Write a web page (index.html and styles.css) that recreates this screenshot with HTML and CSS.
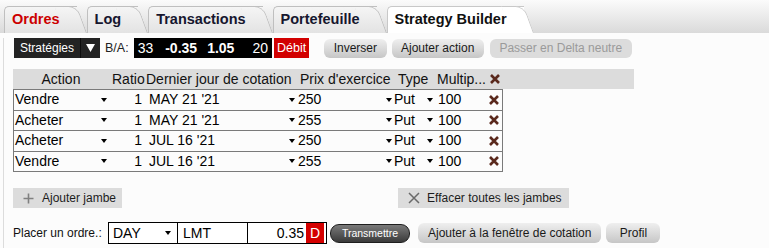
FILE: index.html
```html
<!DOCTYPE html>
<html lang="fr">
<head>
<meta charset="utf-8">
<title>Strategy Builder</title>
<link rel="stylesheet" href="styles.css">
</head>
<body>
<div class="tabs">
  <div class="tab tab-red">Ordres</div>
  <div class="tab">Log</div>
  <div class="tab">Transactions</div>
  <div class="tab">Portefeuille</div>
  <div class="tab tab-active">Strategy Builder</div>
</div>
<div class="content">
  <div class="toolbar">
    <div class="strat">Stratégies</div>
    <div class="strat-arrow"><svg width="9" height="8" viewBox="0 0 9 8"><path d="M0 0H9L4.5 8Z" fill="#fff"/></svg></div>
    <div class="ba">B/A:</div>
    <div class="quote">
      <span class="q-size">33</span>
      <span class="q-bid">-0.35</span>
      <span class="q-ask">1.05</span>
      <span class="q-size q-size2">20</span>
    </div>
    <div class="debit">Débit</div>
    <div class="btn btn-first">Inverser</div>
    <div class="btn">Ajouter action</div>
    <div class="btn btn-disabled">Passer en Delta neutre</div>
  </div>

  <div class="table">
    <div class="thead">
      <div class="th c1">Action</div>
      <div class="th c2">Ratio</div>
      <div class="th c3">Dernier jour de cotation</div>
      <div class="th c4">Prix d'exercice</div>
      <div class="th c5">Type</div>
      <div class="th c6">Multip...</div>
      <div class="th c7"><svg class="xicon" width="10" height="10" viewBox="0 0 10 10"><path d="M1 1L9 9M9 1L1 9"/></svg></div>
    </div>
    <div class="row">
      <div class="td c1 sel"><span>Vendre</span><i class="arr"></i></div>
      <div class="td c2">1</div>
      <div class="td c3 sel"><span>MAY 21 '21</span><i class="arr"></i></div>
      <div class="td c4 sel"><span>250</span><i class="arr"></i></div>
      <div class="td c5 sel"><span>Put</span><i class="arr"></i></div>
      <div class="td c6">100</div>
      <div class="td c7"><svg class="xicon" width="10" height="10" viewBox="0 0 10 10"><path d="M1 1L9 9M9 1L1 9"/></svg></div>
    </div>
    <div class="row">
      <div class="td c1 sel"><span>Acheter</span><i class="arr"></i></div>
      <div class="td c2">1</div>
      <div class="td c3 sel"><span>MAY 21 '21</span><i class="arr"></i></div>
      <div class="td c4 sel"><span>255</span><i class="arr"></i></div>
      <div class="td c5 sel"><span>Put</span><i class="arr"></i></div>
      <div class="td c6">100</div>
      <div class="td c7"><svg class="xicon" width="10" height="10" viewBox="0 0 10 10"><path d="M1 1L9 9M9 1L1 9"/></svg></div>
    </div>
    <div class="row">
      <div class="td c1 sel"><span>Acheter</span><i class="arr"></i></div>
      <div class="td c2">1</div>
      <div class="td c3 sel"><span>JUL 16 '21</span><i class="arr"></i></div>
      <div class="td c4 sel"><span>250</span><i class="arr"></i></div>
      <div class="td c5 sel"><span>Put</span><i class="arr"></i></div>
      <div class="td c6">100</div>
      <div class="td c7"><svg class="xicon" width="10" height="10" viewBox="0 0 10 10"><path d="M1 1L9 9M9 1L1 9"/></svg></div>
    </div>
    <div class="row">
      <div class="td c1 sel"><span>Vendre</span><i class="arr"></i></div>
      <div class="td c2">1</div>
      <div class="td c3 sel"><span>JUL 16 '21</span><i class="arr"></i></div>
      <div class="td c4 sel"><span>255</span><i class="arr"></i></div>
      <div class="td c5 sel"><span>Put</span><i class="arr"></i></div>
      <div class="td c6">100</div>
      <div class="td c7"><svg class="xicon" width="10" height="10" viewBox="0 0 10 10"><path d="M1 1L9 9M9 1L1 9"/></svg></div>
    </div>
  </div>

  <div class="legs">
    <div class="flat-btn add-leg"><svg width="11" height="11" viewBox="0 0 11 11"><path d="M5.5 0.5V10.5M0.5 5.5H10.5" stroke="#808080" stroke-width="1.6"/></svg><span>Ajouter jambe</span></div>
    <div class="flat-btn clear-legs"><svg width="12" height="12" viewBox="0 0 12 12"><path d="M1 1L11 11M11 1L1 11" stroke="#6a6a6a" stroke-width="1.5"/></svg><span>Effacer toutes les jambes</span></div>
  </div>

  <div class="order">
    <div class="order-label">Placer un ordre.:</div>
    <div class="order-box">
      <div class="o-day"><span>DAY</span><i class="arr"></i></div>
      <div class="o-type">LMT</div>
      <div class="o-price">0.35</div>
      <div class="o-d">D</div>
    </div>
    <div class="transmit">Transmettre</div>
    <div class="btn btn-quote">Ajouter à la fenêtre de cotation</div>
    <div class="btn btn-profil">Profil</div>
  </div>
</div>
</body>
</html>
```

FILE: styles.css
```css
* { box-sizing: border-box; }

body {
  margin: 0;
  background: #fcfcfc;
  font-family: "Liberation Sans", Arial, sans-serif;
  color: #000;
}

/* ---------- tabs ---------- */
.tabs {
  display: flex;
  align-items: flex-end;
  height: 33px;
  padding-left: 4px;
  background: linear-gradient(#fbfbfb, #dadada);
}

.tab {
  position: relative;
  z-index: 0;
  height: 27px;
  margin-right: 10px;
  padding: 0 17px 0 7px;
  border: 1px solid #bfbfbf;
  border-right: none;
  border-bottom: none;
  border-radius: 5px 0 0 0;
  background: linear-gradient(#f5f5f5, #e3e3e3);
  font-size: 14.5px;
  font-weight: bold;
  line-height: 25px;
  color: #16162e;
  white-space: nowrap;
}

.tab::after {
  content: "";
  position: absolute;
  z-index: -1;
  top: -1px;
  bottom: 0;
  right: -10px;
  width: 22px;
  background: inherit;
  border-top: 1px solid #bfbfbf;
  border-right: 1px solid #bfbfbf;
  border-radius: 0 9px 0 0;
  transform: skewX(20deg);
  transform-origin: bottom left;
}

.tab-red { color: #cc0000; }

.tab-active {
  z-index: 1;
  background: #fff;
  border-color: #c8c8c8;
  color: #111;
}
.tab-active::after { border-color: #c8c8c8; }

/* ---------- content ---------- */
.content {
  margin-left: 3px;
  border-left: 1px solid #dcdcdc;
  padding-left: 9px;
  height: 215px;
}

.toolbar {
  display: flex;
  align-items: center;
  height: 20px;
  margin-top: 5px;
  padding-left: 1px;
  font-size: 12px;
}

.strat {
  height: 20px;
  width: 66px;
  background: #232323;
  color: #fff;
  line-height: 20px;
  text-align: center;
  font-size: 12px;
}

.strat-arrow {
  display: flex;
  align-items: center;
  justify-content: center;
  width: 20px;
  height: 20px;
  background: #232323;
  border-left: 1px solid #0c0c0c;
}

.ba {
  margin-left: 5px;
  color: #222;
  font-size: 12.5px;
}

.quote {
  display: flex;
  align-items: center;
  height: 20px;
  margin-left: 5px;
  padding: 0 4px;
  background: #000;
  color: #fff;
  font-size: 14px;
}
.q-bid { margin-left: 12px; font-weight: bold; }
.q-ask { margin-left: 10px; font-weight: bold; }
.q-size2 { margin-left: 18px; }

.debit {
  height: 20px;
  margin-left: 2px;
  padding: 0 3px;
  background: #d20000;
  color: #fff;
  font-size: 12.5px;
  line-height: 20px;
}

.btn {
  height: 19px;
  margin-left: 5px;
  padding: 0 9.5px;
  border-radius: 6px;
  background: linear-gradient(#efefef, #c6c6c6);
  color: #1a1a1a;
  font-size: 12px;
  line-height: 19px;
  white-space: nowrap;
}
.btn-first { margin-left: 15px; }
.btn-disabled {
  margin-left: 6px;
  background: #dcdcdc;
  color: #9a9a9a;
}

/* ---------- table ---------- */
.table {
  margin-top: 11px;
  font-size: 14px;
}

.thead {
  display: grid;
  grid-template-columns: 94px 37px 153px 96px 42px 52px 14px;
  width: 621px;
  height: 20px;
  padding-left: 1px;
  background: #dcdcdc;
  color: #111;
  line-height: 20px;
  white-space: nowrap;
}

.row {
  display: grid;
  grid-template-columns: 94px 37px 153px 96px 42px 52px 14px;
  width: 490px;
  height: 20.5px;
  border: 1px solid #7a7a7a;
  border-top: none;
  line-height: 19.5px;
  white-space: nowrap;
}
.thead + .row { border-top: 1px solid #7a7a7a; height: 21.5px; }

.sel {
  display: flex;
  align-items: center;
  justify-content: space-between;
}

.arr {
  display: block;
  width: 0;
  height: 0;
  border-left: 3.5px solid transparent;
  border-right: 3.5px solid transparent;
  border-top: 4px solid #000;
}

.th.c1 { text-align: center; }
.th.c2 { padding-left: 4px; }
.th.c3 { padding-left: 1px; }
.th.c4 { padding-left: 2px; }
.th.c5 { padding-left: 4px; }
.th.c6 { padding-left: 1px; overflow: hidden; }
.th.c7 { padding-left: 2px; display: flex; align-items: center; }

.td.c1 { padding: 0 1px 0 1px; }
.td.c2 { padding-right: 3px; text-align: right; }
.td.c3 { padding: 0 3px 0 4px; }
.td.c4 { padding: 0 2px 0 0; }
.td.c5 { padding: 0 3px 0 0; }
.td.c6 { padding-left: 2px; }
.td.c7 { display: flex; align-items: center; padding-left: 1px; }

.xicon path {
  stroke: #5a291d;
  stroke-width: 2.6;
  fill: none;
}

/* ---------- legs ---------- */
.legs {
  display: flex;
  gap: 276px;
  margin-top: 16px;
}

.flat-btn {
  display: flex;
  align-items: center;
  height: 20px;
  background: #dcdcdc;
  color: #1c1c1c;
  font-size: 12px;
  white-space: nowrap;
}
.add-leg { padding: 0 6px 0 10px; }
.add-leg span { margin-left: 8px; }
.clear-legs { padding: 0 7px 0 10px; }
.clear-legs span { margin-left: 7px; }

/* ---------- order ---------- */
.order {
  display: flex;
  align-items: center;
  margin-top: 14px;
  height: 22px;
}

.order-label {
  width: 95px;
  font-size: 12px;
  color: #111;
  white-space: nowrap;
}

.order-box {
  display: flex;
  height: 22px;
  width: 219px;
  border: 1px solid #000;
  background: #fff;
  font-size: 14px;
  line-height: 20px;
  padding-right: 2px;
}

.o-day {
  display: flex;
  align-items: center;
  justify-content: space-between;
  width: 69px;
  padding: 0 6px 0 4px;
  border-right: 1px solid #000;
}
.o-type {
  width: 70px;
  padding-left: 5px;
  border-right: 1px solid #000;
}
.o-price {
  width: 56px;
  text-align: right;
}
.o-d {
  width: 18px;
  margin-left: 2px;
  background: #d40000;
  color: #fff;
  text-align: center;
}

.transmit {
  height: 19px;
  width: 80px;
  margin-left: 3px;
  border: 1px solid #1e1e1e;
  border-radius: 9px;
  background: linear-gradient(#7a7a7a, #3a3a3a);
  color: #fff;
  font-size: 10.5px;
  line-height: 17px;
  text-align: center;
  white-space: nowrap;
}

.btn-quote {
  height: 20px;
  margin-left: 8px;
  line-height: 20px;
  padding: 0 10px;
}
.btn-profil {
  height: 20px;
  width: 54px;
  line-height: 20px;
  text-align: center;
  padding: 0;
}
```
